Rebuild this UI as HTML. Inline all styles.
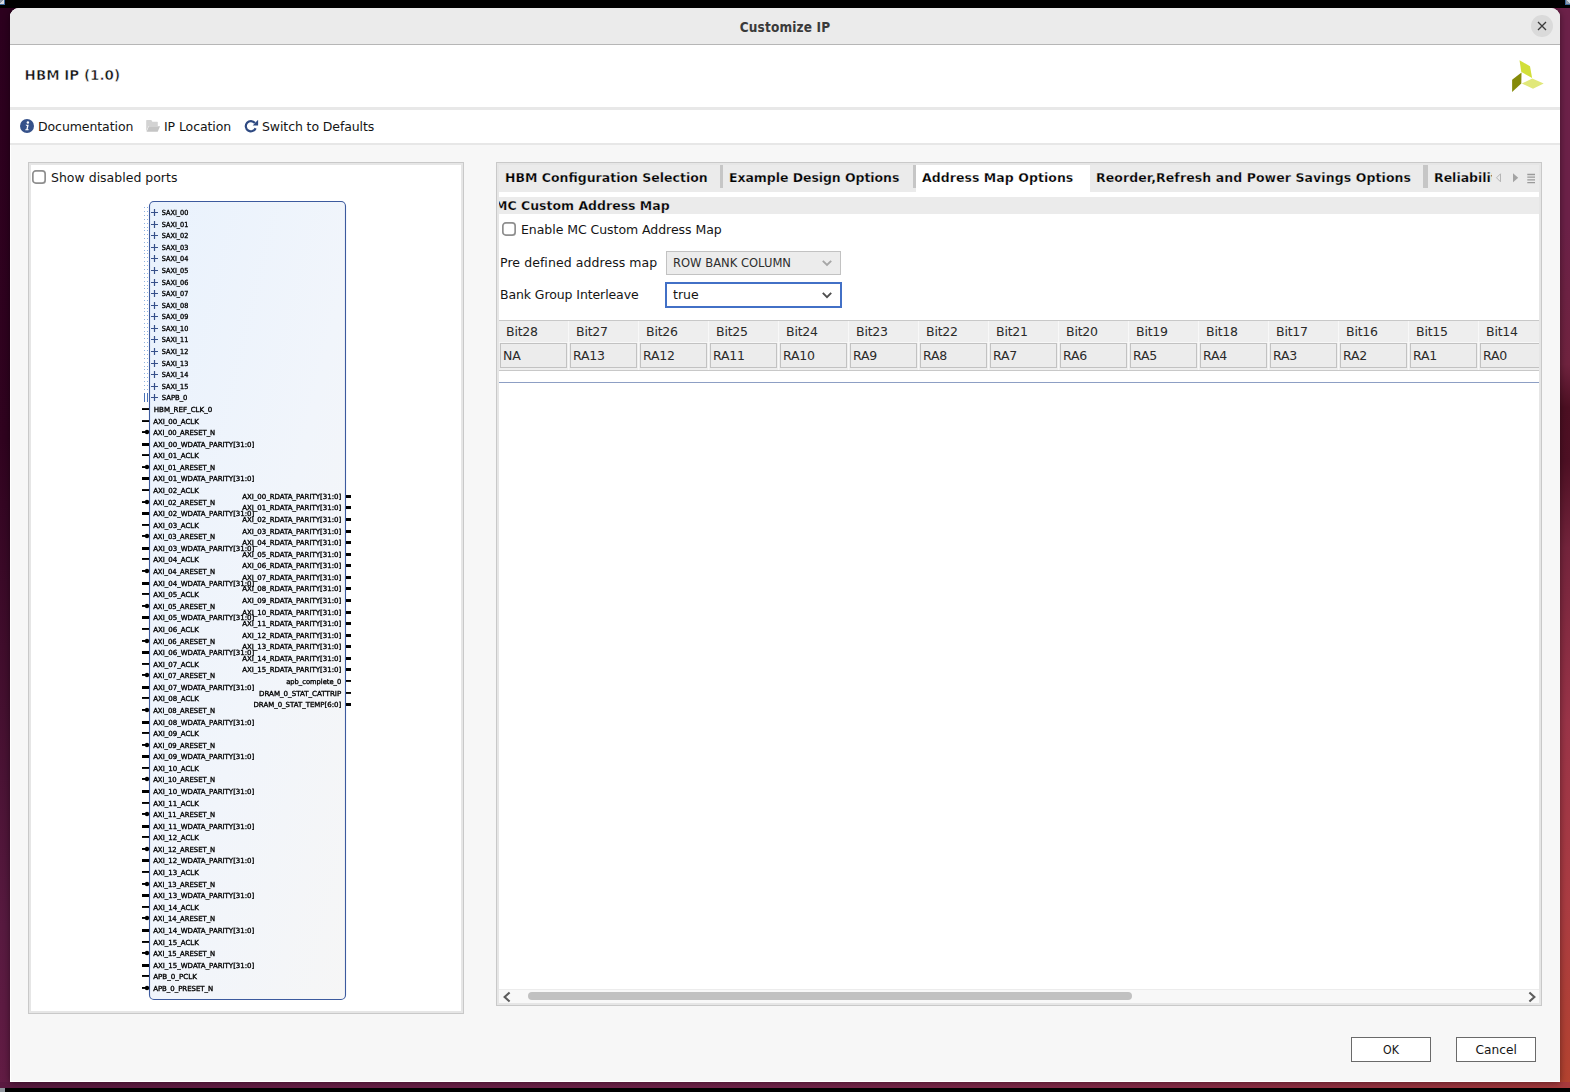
<!DOCTYPE html>
<html lang="en"><head><meta charset="utf-8"><title>Customize IP</title>
<style>
*{box-sizing:border-box;margin:0;padding:0}
html,body{width:1570px;height:1092px;overflow:hidden;background:#000}
body{position:relative;font-family:"DejaVu Sans","Liberation Sans",sans-serif;font-size:12.5px;color:#141414;-webkit-font-smoothing:antialiased}
.abs{position:absolute}
.t{position:absolute;white-space:nowrap;line-height:16px;height:16px}
.b{font-weight:bold}
#desk{position:absolute;left:0;top:8px;width:1570px;height:1080px;background:linear-gradient(90deg,#2c001e 0,#2c001e 10px,rgba(0,0,0,0) 10px),#6b2048}
#deskL{position:absolute;left:0;top:8px;width:10px;height:1080px;background:linear-gradient(180deg,#2c001e 0%,#30031f 40%,#451030 65%,#581a40 85%,#621c44 100%)}
#deskR{position:absolute;left:1560px;top:8px;width:10px;height:1080px;background:linear-gradient(180deg,#6c2149 0%,#6c2148 20%,#70233f 33%,#4c0f22 37%,#4e1024 42%,#74243c 50%,#9a3448 66%,#ab3c42 83%,#b4432f 100%)}
#deskB{position:absolute;left:0;top:1082px;width:1570px;height:6px;background:linear-gradient(90deg,#5a1940 0%,#6a1f48 20%,#74244c 50%,#8a2c48 75%,#a83a3c 100%)}
#dlg{box-shadow:0 1px 7px rgba(0,0,0,.45),inset 1px 0 0 #fff,inset 0 -1px 0 #fff;position:absolute;left:10px;top:8px;width:1550px;height:1074px;background:#f7f7f7;border-radius:9px 9px 0 0;overflow:hidden}
#titlebar{position:absolute;left:0;top:0;width:1550px;height:36px;background:#ebebeb}
#titleline{position:absolute;left:0;top:36px;width:1550px;height:1px;background:#b6b6b6}
#hdr{position:absolute;left:0;top:37px;width:1550px;height:62px;background:#fff}
#sep1{position:absolute;left:0;top:99px;width:1550px;height:3px;background:#e8e8e8}
#tb{position:absolute;left:0;top:102px;width:1550px;height:33px;background:#fff}
#sep2{position:absolute;left:0;top:135px;width:1550px;height:2px;background:#e7e7e7}
.panel{position:absolute;border:1px solid #c9c9c9;background:#fff;box-shadow:inset 0 0 0 2px #e6e6e6}
.cb{position:absolute;width:14px;height:14px;border:1.3px solid #8c8c8c;border-radius:3.5px;background:#fff}
.btn{position:absolute;width:80px;height:25px;border:1px solid #6a6a6a;background:#fff;text-align:center;line-height:23px}
svg.diag{position:absolute;left:28px;top:162px;will-change:transform}
.cell{width:67px;height:25px;border:1px solid #c2c2c2;background:#ececec}
#tbl .t{color:#2a2a2a;letter-spacing:-0.2px}
.e1{-webkit-text-stroke:0.25px #ebebeb;color:#000}
.e2{-webkit-text-stroke:0.25px #ffffff;color:#000}

</style></head>
<body>
<div class="abs" style="left:0;top:0;width:5px;height:5px;background:linear-gradient(135deg,#8d97a8 45%,#d6dae2 46%);border-right:1px solid #3f6a9f;border-bottom:1px solid #3f6a9f"></div><div class="abs" style="left:0;top:1088px;width:5px;height:4px;background:#8f949c"></div>
<div class="abs" style="left:1565px;top:0;width:5px;height:5px;background:linear-gradient(225deg,#d6dae2 45%,#8d97a8 46%);border-left:1px solid #3f6a9f;border-bottom:1px solid #3f6a9f"></div>
<div class="abs" style="left:0;top:8px;width:785px;height:12px;background:#2c001e"></div><div class="abs" style="left:785px;top:8px;width:785px;height:12px;background:#6c2149"></div><div id="deskL"></div><div id="deskR"></div><div id="deskB"></div>
<div id="dlg">
 <div id="titlebar"></div><div id="titleline"></div>
 <div class="t b" id="ttl" style="letter-spacing:0.17px;left:0;width:1550px;top:11px;text-align:center;font-size:13.5px;color:#3a3a3a;font-family:'DejaVu Sans Condensed','DejaVu Sans',sans-serif">Customize IP</div>
 <div class="abs" style="left:1521px;top:7px;width:22px;height:22px;border-radius:11px;background:#dadada"></div>
 <svg class="abs" style="left:1521px;top:7px" width="22" height="22" viewBox="0 0 22 22"><path d="M7 7l8 8M15 7l-8 8" stroke="#3a3a3a" stroke-width="1.3" fill="none"/></svg>
 <div id="hdr"></div>
 <div class="t b e2" id="hbm" style="-webkit-text-stroke:0.55px #fff;left:14.6px;top:59px;font-size:13.5px;color:#111">HBM IP (1.0)</div>
 <svg class="abs" style="left:1495px;top:48px" width="45" height="45" viewBox="1505 56 45 45"><polygon points="1519.5,60.2 1530,66.3 1532.1,77.9 1521.3,72" fill="#d2df3a"/><polygon points="1521.5,72.4 1521.3,83.4 1512.1,91.9 1512.1,79.8" fill="#858a09"/><polygon points="1521.8,83.4 1532.3,78.6 1543.7,83.4 1533,88.7" fill="#e1e87a"/></svg>
 <div id="sep1"></div><div id="tb"></div><div id="sep2"></div>
 <svg class="abs" style="left:10px;top:111px" width="14" height="14" viewBox="0 0 14 14"><circle cx="7" cy="7" r="7" fill="#36528a"/><circle cx="7.9" cy="3.5" r="1.2" fill="#fff"/><path d="M5.6 5.7h3.1l-1 4.5h1l-.25 1.1H5.2l.25-1.1h.9l.75-3.4h-.95z" fill="#fff"/></svg>
 <div class="t" id="doc" style="letter-spacing:-0.08px;left:28px;top:111px">Documentation</div>
 <svg class="abs" style="left:135px;top:110px" width="17" height="16" viewBox="145 118 17 16"><path d="M146.2 120.6q0-.5.5-.5h4.6l1.1 1.7h4.9q.5 0 .5.5v3.6H148.6L146.2 131.4z" fill="#d3d3d3"/><path d="M148.9 126.2H160.1L157.7 131.8H146.6z" fill="#c5c5c5"/></svg>
 <div class="t" id="iploc" style="letter-spacing:-0.09px;left:154px;top:111px">IP Location</div>
 <svg class="abs" style="left:233px;top:109px" width="18" height="18" viewBox="243 117 18 18"><path d="M254.9 123.0A5.1 5.1 0 1 0 255.6 128.2" stroke="#2f4a82" stroke-width="2.2" fill="none"/><path d="M258.1 119.7V125.5H252.7z" fill="#2f4a82"/></svg>
 <div class="t" id="sw" style="letter-spacing:-0.1px;left:252px;top:111px">Switch to Defaults</div>
</div>
<!-- left panel -->
<div class="panel" style="left:28px;top:162px;width:436px;height:852px"></div>
<svg class="abs" style="left:32px;top:170px" width="14" height="14" viewBox="0 0 14 14"><rect x="0.85" y="0.85" width="12.3" height="12.3" rx="3" ry="3" fill="#fff" stroke="#8f8f8f" stroke-width="1.7"/></svg>
<div class="t" id="sdp" style="left:51px;top:170px">Show disabled ports</div>
<svg class="diag" width="436" height="852" viewBox="28 162 436 852">
<defs><linearGradient id="bg" x1="0" y1="0" x2="1" y2="1"><stop offset="0" stop-color="#e9f2fd"/><stop offset="0.55" stop-color="#f1f5fb"/><stop offset="1" stop-color="#f6f6f6"/></linearGradient></defs>
<rect x="149.5" y="201.5" width="196" height="798" rx="4.5" ry="4.5" fill="url(#bg)" stroke="#3c5a9e" stroke-width="1.1"/>
<g font-family="'DejaVu Sans', 'Liberation Sans', sans-serif" font-size="7" fill="#000" stroke="#000" stroke-width="0.34">
<path d="M151 212.5h7M154.5 209v7" stroke="#36508a" stroke-width="1.2" fill="none"/>
<rect x="144" y="207" width="1" height="1" fill="#8db0e0" stroke="none"/><rect x="147" y="207" width="1" height="1" fill="#8db0e0" stroke="none"/>
<rect x="144" y="211" width="1" height="1" fill="#8db0e0" stroke="none"/><rect x="147" y="211" width="1" height="1" fill="#8db0e0" stroke="none"/>
<rect x="144" y="215" width="1" height="1" fill="#8db0e0" stroke="none"/><rect x="147" y="215" width="1" height="1" fill="#8db0e0" stroke="none"/>
<text x="161.8" y="215" textLength="26.6" lengthAdjust="spacingAndGlyphs">SAXI_00</text>
<path d="M151 224.5h7M154.5 221v7" stroke="#36508a" stroke-width="1.2" fill="none"/>
<rect x="144" y="219" width="1" height="1" fill="#8db0e0" stroke="none"/><rect x="147" y="219" width="1" height="1" fill="#8db0e0" stroke="none"/>
<rect x="144" y="223" width="1" height="1" fill="#8db0e0" stroke="none"/><rect x="147" y="223" width="1" height="1" fill="#8db0e0" stroke="none"/>
<rect x="144" y="227" width="1" height="1" fill="#8db0e0" stroke="none"/><rect x="147" y="227" width="1" height="1" fill="#8db0e0" stroke="none"/>
<text x="161.8" y="227" textLength="26.6" lengthAdjust="spacingAndGlyphs">SAXI_01</text>
<path d="M151 235.5h7M154.5 232v7" stroke="#36508a" stroke-width="1.2" fill="none"/>
<rect x="144" y="230" width="1" height="1" fill="#8db0e0" stroke="none"/><rect x="147" y="230" width="1" height="1" fill="#8db0e0" stroke="none"/>
<rect x="144" y="234" width="1" height="1" fill="#8db0e0" stroke="none"/><rect x="147" y="234" width="1" height="1" fill="#8db0e0" stroke="none"/>
<rect x="144" y="238" width="1" height="1" fill="#8db0e0" stroke="none"/><rect x="147" y="238" width="1" height="1" fill="#8db0e0" stroke="none"/>
<text x="161.8" y="238" textLength="26.6" lengthAdjust="spacingAndGlyphs">SAXI_02</text>
<path d="M151 247.5h7M154.5 244v7" stroke="#36508a" stroke-width="1.2" fill="none"/>
<rect x="144" y="242" width="1" height="1" fill="#8db0e0" stroke="none"/><rect x="147" y="242" width="1" height="1" fill="#8db0e0" stroke="none"/>
<rect x="144" y="246" width="1" height="1" fill="#8db0e0" stroke="none"/><rect x="147" y="246" width="1" height="1" fill="#8db0e0" stroke="none"/>
<rect x="144" y="250" width="1" height="1" fill="#8db0e0" stroke="none"/><rect x="147" y="250" width="1" height="1" fill="#8db0e0" stroke="none"/>
<text x="161.8" y="250" textLength="26.6" lengthAdjust="spacingAndGlyphs">SAXI_03</text>
<path d="M151 258.5h7M154.5 255v7" stroke="#36508a" stroke-width="1.2" fill="none"/>
<rect x="144" y="253" width="1" height="1" fill="#8db0e0" stroke="none"/><rect x="147" y="253" width="1" height="1" fill="#8db0e0" stroke="none"/>
<rect x="144" y="257" width="1" height="1" fill="#8db0e0" stroke="none"/><rect x="147" y="257" width="1" height="1" fill="#8db0e0" stroke="none"/>
<rect x="144" y="261" width="1" height="1" fill="#8db0e0" stroke="none"/><rect x="147" y="261" width="1" height="1" fill="#8db0e0" stroke="none"/>
<text x="161.8" y="261" textLength="26.6" lengthAdjust="spacingAndGlyphs">SAXI_04</text>
<path d="M151 270.5h7M154.5 267v7" stroke="#36508a" stroke-width="1.2" fill="none"/>
<rect x="144" y="265" width="1" height="1" fill="#8db0e0" stroke="none"/><rect x="147" y="265" width="1" height="1" fill="#8db0e0" stroke="none"/>
<rect x="144" y="269" width="1" height="1" fill="#8db0e0" stroke="none"/><rect x="147" y="269" width="1" height="1" fill="#8db0e0" stroke="none"/>
<rect x="144" y="273" width="1" height="1" fill="#8db0e0" stroke="none"/><rect x="147" y="273" width="1" height="1" fill="#8db0e0" stroke="none"/>
<text x="161.8" y="273" textLength="26.6" lengthAdjust="spacingAndGlyphs">SAXI_05</text>
<path d="M151 282.5h7M154.5 279v7" stroke="#36508a" stroke-width="1.2" fill="none"/>
<rect x="144" y="277" width="1" height="1" fill="#8db0e0" stroke="none"/><rect x="147" y="277" width="1" height="1" fill="#8db0e0" stroke="none"/>
<rect x="144" y="281" width="1" height="1" fill="#8db0e0" stroke="none"/><rect x="147" y="281" width="1" height="1" fill="#8db0e0" stroke="none"/>
<rect x="144" y="285" width="1" height="1" fill="#8db0e0" stroke="none"/><rect x="147" y="285" width="1" height="1" fill="#8db0e0" stroke="none"/>
<text x="161.8" y="285" textLength="26.6" lengthAdjust="spacingAndGlyphs">SAXI_06</text>
<path d="M151 293.5h7M154.5 290v7" stroke="#36508a" stroke-width="1.2" fill="none"/>
<rect x="144" y="288" width="1" height="1" fill="#8db0e0" stroke="none"/><rect x="147" y="288" width="1" height="1" fill="#8db0e0" stroke="none"/>
<rect x="144" y="292" width="1" height="1" fill="#8db0e0" stroke="none"/><rect x="147" y="292" width="1" height="1" fill="#8db0e0" stroke="none"/>
<rect x="144" y="296" width="1" height="1" fill="#8db0e0" stroke="none"/><rect x="147" y="296" width="1" height="1" fill="#8db0e0" stroke="none"/>
<text x="161.8" y="296" textLength="26.6" lengthAdjust="spacingAndGlyphs">SAXI_07</text>
<path d="M151 305.5h7M154.5 302v7" stroke="#36508a" stroke-width="1.2" fill="none"/>
<rect x="144" y="300" width="1" height="1" fill="#8db0e0" stroke="none"/><rect x="147" y="300" width="1" height="1" fill="#8db0e0" stroke="none"/>
<rect x="144" y="304" width="1" height="1" fill="#8db0e0" stroke="none"/><rect x="147" y="304" width="1" height="1" fill="#8db0e0" stroke="none"/>
<rect x="144" y="308" width="1" height="1" fill="#8db0e0" stroke="none"/><rect x="147" y="308" width="1" height="1" fill="#8db0e0" stroke="none"/>
<text x="161.8" y="308" textLength="26.6" lengthAdjust="spacingAndGlyphs">SAXI_08</text>
<path d="M151 316.5h7M154.5 313v7" stroke="#36508a" stroke-width="1.2" fill="none"/>
<rect x="144" y="311" width="1" height="1" fill="#8db0e0" stroke="none"/><rect x="147" y="311" width="1" height="1" fill="#8db0e0" stroke="none"/>
<rect x="144" y="315" width="1" height="1" fill="#8db0e0" stroke="none"/><rect x="147" y="315" width="1" height="1" fill="#8db0e0" stroke="none"/>
<rect x="144" y="319" width="1" height="1" fill="#8db0e0" stroke="none"/><rect x="147" y="319" width="1" height="1" fill="#8db0e0" stroke="none"/>
<text x="161.8" y="319" textLength="26.6" lengthAdjust="spacingAndGlyphs">SAXI_09</text>
<path d="M151 328.5h7M154.5 325v7" stroke="#36508a" stroke-width="1.2" fill="none"/>
<rect x="144" y="323" width="1" height="1" fill="#8db0e0" stroke="none"/><rect x="147" y="323" width="1" height="1" fill="#8db0e0" stroke="none"/>
<rect x="144" y="327" width="1" height="1" fill="#8db0e0" stroke="none"/><rect x="147" y="327" width="1" height="1" fill="#8db0e0" stroke="none"/>
<rect x="144" y="331" width="1" height="1" fill="#8db0e0" stroke="none"/><rect x="147" y="331" width="1" height="1" fill="#8db0e0" stroke="none"/>
<text x="161.8" y="331" textLength="26.6" lengthAdjust="spacingAndGlyphs">SAXI_10</text>
<path d="M151 339.5h7M154.5 336v7" stroke="#36508a" stroke-width="1.2" fill="none"/>
<rect x="144" y="334" width="1" height="1" fill="#8db0e0" stroke="none"/><rect x="147" y="334" width="1" height="1" fill="#8db0e0" stroke="none"/>
<rect x="144" y="338" width="1" height="1" fill="#8db0e0" stroke="none"/><rect x="147" y="338" width="1" height="1" fill="#8db0e0" stroke="none"/>
<rect x="144" y="342" width="1" height="1" fill="#8db0e0" stroke="none"/><rect x="147" y="342" width="1" height="1" fill="#8db0e0" stroke="none"/>
<text x="161.8" y="342" textLength="26.6" lengthAdjust="spacingAndGlyphs">SAXI_11</text>
<path d="M151 351.5h7M154.5 348v7" stroke="#36508a" stroke-width="1.2" fill="none"/>
<rect x="144" y="346" width="1" height="1" fill="#8db0e0" stroke="none"/><rect x="147" y="346" width="1" height="1" fill="#8db0e0" stroke="none"/>
<rect x="144" y="350" width="1" height="1" fill="#8db0e0" stroke="none"/><rect x="147" y="350" width="1" height="1" fill="#8db0e0" stroke="none"/>
<rect x="144" y="354" width="1" height="1" fill="#8db0e0" stroke="none"/><rect x="147" y="354" width="1" height="1" fill="#8db0e0" stroke="none"/>
<text x="161.8" y="354" textLength="26.6" lengthAdjust="spacingAndGlyphs">SAXI_12</text>
<path d="M151 363.5h7M154.5 360v7" stroke="#36508a" stroke-width="1.2" fill="none"/>
<rect x="144" y="358" width="1" height="1" fill="#8db0e0" stroke="none"/><rect x="147" y="358" width="1" height="1" fill="#8db0e0" stroke="none"/>
<rect x="144" y="362" width="1" height="1" fill="#8db0e0" stroke="none"/><rect x="147" y="362" width="1" height="1" fill="#8db0e0" stroke="none"/>
<rect x="144" y="366" width="1" height="1" fill="#8db0e0" stroke="none"/><rect x="147" y="366" width="1" height="1" fill="#8db0e0" stroke="none"/>
<text x="161.8" y="366" textLength="26.6" lengthAdjust="spacingAndGlyphs">SAXI_13</text>
<path d="M151 374.5h7M154.5 371v7" stroke="#36508a" stroke-width="1.2" fill="none"/>
<rect x="144" y="369" width="1" height="1" fill="#8db0e0" stroke="none"/><rect x="147" y="369" width="1" height="1" fill="#8db0e0" stroke="none"/>
<rect x="144" y="373" width="1" height="1" fill="#8db0e0" stroke="none"/><rect x="147" y="373" width="1" height="1" fill="#8db0e0" stroke="none"/>
<rect x="144" y="377" width="1" height="1" fill="#8db0e0" stroke="none"/><rect x="147" y="377" width="1" height="1" fill="#8db0e0" stroke="none"/>
<text x="161.8" y="377" textLength="26.6" lengthAdjust="spacingAndGlyphs">SAXI_14</text>
<path d="M151 386.5h7M154.5 383v7" stroke="#36508a" stroke-width="1.2" fill="none"/>
<rect x="144" y="381" width="1" height="1" fill="#8db0e0" stroke="none"/><rect x="147" y="381" width="1" height="1" fill="#8db0e0" stroke="none"/>
<rect x="144" y="385" width="1" height="1" fill="#8db0e0" stroke="none"/><rect x="147" y="385" width="1" height="1" fill="#8db0e0" stroke="none"/>
<rect x="144" y="389" width="1" height="1" fill="#8db0e0" stroke="none"/><rect x="147" y="389" width="1" height="1" fill="#8db0e0" stroke="none"/>
<text x="161.8" y="389" textLength="26.6" lengthAdjust="spacingAndGlyphs">SAXI_15</text>
<path d="M151 397.5h7M154.5 394v7" stroke="#36508a" stroke-width="1.2" fill="none"/>
<rect x="144" y="393" width="1" height="9" fill="#4a72b8" stroke="none"/><rect x="147" y="393" width="1" height="9" fill="#4a72b8" stroke="none"/>
<text x="161.8" y="400" textLength="25.6" lengthAdjust="spacingAndGlyphs">SAPB_0</text>
<rect x="142" y="408.1" width="7" height="1.9" stroke="none"/>
<text x="153.8" y="412" textLength="58.4" lengthAdjust="spacingAndGlyphs">HBM_REF_CLK_0</text>
<rect x="142" y="420.1" width="7" height="1.9" stroke="none"/>
<text x="153.2" y="424" textLength="45.7" lengthAdjust="spacingAndGlyphs">AXI_00_ACLK</text>
<rect x="142" y="431.1" width="4" height="1.9" stroke="none"/><circle cx="147" cy="432" r="2.2" stroke="none"/>
<text x="153.2" y="435" textLength="62.0" lengthAdjust="spacingAndGlyphs">AXI_00_ARESET_N</text>
<rect x="142" y="443" width="7" height="3" stroke="none"/>
<text x="153.2" y="447" textLength="101.1" lengthAdjust="spacingAndGlyphs">AXI_00_WDATA_PARITY[31:0]</text>
<rect x="142" y="454.1" width="7" height="1.9" stroke="none"/>
<text x="153.2" y="458" textLength="45.7" lengthAdjust="spacingAndGlyphs">AXI_01_ACLK</text>
<rect x="142" y="466.1" width="4" height="1.9" stroke="none"/><circle cx="147" cy="467" r="2.2" stroke="none"/>
<text x="153.2" y="470" textLength="62.0" lengthAdjust="spacingAndGlyphs">AXI_01_ARESET_N</text>
<rect x="142" y="477" width="7" height="3" stroke="none"/>
<text x="153.2" y="481" textLength="101.1" lengthAdjust="spacingAndGlyphs">AXI_01_WDATA_PARITY[31:0]</text>
<rect x="142" y="489.1" width="7" height="1.9" stroke="none"/>
<text x="153.2" y="493" textLength="45.7" lengthAdjust="spacingAndGlyphs">AXI_02_ACLK</text>
<rect x="142" y="501.1" width="4" height="1.9" stroke="none"/><circle cx="147" cy="502" r="2.2" stroke="none"/>
<text x="153.2" y="505" textLength="62.0" lengthAdjust="spacingAndGlyphs">AXI_02_ARESET_N</text>
<rect x="142" y="512" width="7" height="3" stroke="none"/>
<text x="153.2" y="516" textLength="101.1" lengthAdjust="spacingAndGlyphs">AXI_02_WDATA_PARITY[31:0]</text>
<rect x="142" y="524.0" width="7" height="1.9" stroke="none"/>
<text x="153.2" y="528" textLength="45.7" lengthAdjust="spacingAndGlyphs">AXI_03_ACLK</text>
<rect x="142" y="535.0" width="4" height="1.9" stroke="none"/><circle cx="147" cy="536" r="2.2" stroke="none"/>
<text x="153.2" y="539" textLength="62.0" lengthAdjust="spacingAndGlyphs">AXI_03_ARESET_N</text>
<rect x="142" y="547" width="7" height="3" stroke="none"/>
<text x="153.2" y="551" textLength="101.1" lengthAdjust="spacingAndGlyphs">AXI_03_WDATA_PARITY[31:0]</text>
<rect x="142" y="558.0" width="7" height="1.9" stroke="none"/>
<text x="153.2" y="562" textLength="45.7" lengthAdjust="spacingAndGlyphs">AXI_04_ACLK</text>
<rect x="142" y="570.0" width="4" height="1.9" stroke="none"/><circle cx="147" cy="571" r="2.2" stroke="none"/>
<text x="153.2" y="574" textLength="62.0" lengthAdjust="spacingAndGlyphs">AXI_04_ARESET_N</text>
<rect x="142" y="582" width="7" height="3" stroke="none"/>
<text x="153.2" y="586" textLength="101.1" lengthAdjust="spacingAndGlyphs">AXI_04_WDATA_PARITY[31:0]</text>
<rect x="142" y="593.0" width="7" height="1.9" stroke="none"/>
<text x="153.2" y="597" textLength="45.7" lengthAdjust="spacingAndGlyphs">AXI_05_ACLK</text>
<rect x="142" y="605.0" width="4" height="1.9" stroke="none"/><circle cx="147" cy="606" r="2.2" stroke="none"/>
<text x="153.2" y="609" textLength="62.0" lengthAdjust="spacingAndGlyphs">AXI_05_ARESET_N</text>
<rect x="142" y="616" width="7" height="3" stroke="none"/>
<text x="153.2" y="620" textLength="101.1" lengthAdjust="spacingAndGlyphs">AXI_05_WDATA_PARITY[31:0]</text>
<rect x="142" y="628.0" width="7" height="1.9" stroke="none"/>
<text x="153.2" y="632" textLength="45.7" lengthAdjust="spacingAndGlyphs">AXI_06_ACLK</text>
<rect x="142" y="640.0" width="4" height="1.9" stroke="none"/><circle cx="147" cy="641" r="2.2" stroke="none"/>
<text x="153.2" y="644" textLength="62.0" lengthAdjust="spacingAndGlyphs">AXI_06_ARESET_N</text>
<rect x="142" y="651" width="7" height="3" stroke="none"/>
<text x="153.2" y="655" textLength="101.1" lengthAdjust="spacingAndGlyphs">AXI_06_WDATA_PARITY[31:0]</text>
<rect x="142" y="663.0" width="7" height="1.9" stroke="none"/>
<text x="153.2" y="667" textLength="45.7" lengthAdjust="spacingAndGlyphs">AXI_07_ACLK</text>
<rect x="142" y="674.0" width="4" height="1.9" stroke="none"/><circle cx="147" cy="675" r="2.2" stroke="none"/>
<text x="153.2" y="678" textLength="62.0" lengthAdjust="spacingAndGlyphs">AXI_07_ARESET_N</text>
<rect x="142" y="686" width="7" height="3" stroke="none"/>
<text x="153.2" y="690" textLength="101.1" lengthAdjust="spacingAndGlyphs">AXI_07_WDATA_PARITY[31:0]</text>
<rect x="142" y="697.0" width="7" height="1.9" stroke="none"/>
<text x="153.2" y="701" textLength="45.7" lengthAdjust="spacingAndGlyphs">AXI_08_ACLK</text>
<rect x="142" y="709.0" width="4" height="1.9" stroke="none"/><circle cx="147" cy="710" r="2.2" stroke="none"/>
<text x="153.2" y="713" textLength="62.0" lengthAdjust="spacingAndGlyphs">AXI_08_ARESET_N</text>
<rect x="142" y="721" width="7" height="3" stroke="none"/>
<text x="153.2" y="725" textLength="101.1" lengthAdjust="spacingAndGlyphs">AXI_08_WDATA_PARITY[31:0]</text>
<rect x="142" y="732.0" width="7" height="1.9" stroke="none"/>
<text x="153.2" y="736" textLength="45.7" lengthAdjust="spacingAndGlyphs">AXI_09_ACLK</text>
<rect x="142" y="744.0" width="4" height="1.9" stroke="none"/><circle cx="147" cy="745" r="2.2" stroke="none"/>
<text x="153.2" y="748" textLength="62.0" lengthAdjust="spacingAndGlyphs">AXI_09_ARESET_N</text>
<rect x="142" y="755" width="7" height="3" stroke="none"/>
<text x="153.2" y="759" textLength="101.1" lengthAdjust="spacingAndGlyphs">AXI_09_WDATA_PARITY[31:0]</text>
<rect x="142" y="767.0" width="7" height="1.9" stroke="none"/>
<text x="153.2" y="771" textLength="45.7" lengthAdjust="spacingAndGlyphs">AXI_10_ACLK</text>
<rect x="142" y="778.0" width="4" height="1.9" stroke="none"/><circle cx="147" cy="779" r="2.2" stroke="none"/>
<text x="153.2" y="782" textLength="62.0" lengthAdjust="spacingAndGlyphs">AXI_10_ARESET_N</text>
<rect x="142" y="790" width="7" height="3" stroke="none"/>
<text x="153.2" y="794" textLength="101.1" lengthAdjust="spacingAndGlyphs">AXI_10_WDATA_PARITY[31:0]</text>
<rect x="142" y="802.0" width="7" height="1.9" stroke="none"/>
<text x="153.2" y="806" textLength="45.7" lengthAdjust="spacingAndGlyphs">AXI_11_ACLK</text>
<rect x="142" y="813.0" width="4" height="1.9" stroke="none"/><circle cx="147" cy="814" r="2.2" stroke="none"/>
<text x="153.2" y="817" textLength="62.0" lengthAdjust="spacingAndGlyphs">AXI_11_ARESET_N</text>
<rect x="142" y="825" width="7" height="3" stroke="none"/>
<text x="153.2" y="829" textLength="101.1" lengthAdjust="spacingAndGlyphs">AXI_11_WDATA_PARITY[31:0]</text>
<rect x="142" y="836.0" width="7" height="1.9" stroke="none"/>
<text x="153.2" y="840" textLength="45.7" lengthAdjust="spacingAndGlyphs">AXI_12_ACLK</text>
<rect x="142" y="848.0" width="4" height="1.9" stroke="none"/><circle cx="147" cy="849" r="2.2" stroke="none"/>
<text x="153.2" y="852" textLength="62.0" lengthAdjust="spacingAndGlyphs">AXI_12_ARESET_N</text>
<rect x="142" y="859" width="7" height="3" stroke="none"/>
<text x="153.2" y="863" textLength="101.1" lengthAdjust="spacingAndGlyphs">AXI_12_WDATA_PARITY[31:0]</text>
<rect x="142" y="871.0" width="7" height="1.9" stroke="none"/>
<text x="153.2" y="875" textLength="45.7" lengthAdjust="spacingAndGlyphs">AXI_13_ACLK</text>
<rect x="142" y="883.0" width="4" height="1.9" stroke="none"/><circle cx="147" cy="884" r="2.2" stroke="none"/>
<text x="153.2" y="887" textLength="62.0" lengthAdjust="spacingAndGlyphs">AXI_13_ARESET_N</text>
<rect x="142" y="894" width="7" height="3" stroke="none"/>
<text x="153.2" y="898" textLength="101.1" lengthAdjust="spacingAndGlyphs">AXI_13_WDATA_PARITY[31:0]</text>
<rect x="142" y="906.0" width="7" height="1.9" stroke="none"/>
<text x="153.2" y="910" textLength="45.7" lengthAdjust="spacingAndGlyphs">AXI_14_ACLK</text>
<rect x="142" y="917.0" width="4" height="1.9" stroke="none"/><circle cx="147" cy="918" r="2.2" stroke="none"/>
<text x="153.2" y="921" textLength="62.0" lengthAdjust="spacingAndGlyphs">AXI_14_ARESET_N</text>
<rect x="142" y="929" width="7" height="3" stroke="none"/>
<text x="153.2" y="933" textLength="101.1" lengthAdjust="spacingAndGlyphs">AXI_14_WDATA_PARITY[31:0]</text>
<rect x="142" y="941.0" width="7" height="1.9" stroke="none"/>
<text x="153.2" y="945" textLength="45.7" lengthAdjust="spacingAndGlyphs">AXI_15_ACLK</text>
<rect x="142" y="952.0" width="4" height="1.9" stroke="none"/><circle cx="147" cy="953" r="2.2" stroke="none"/>
<text x="153.2" y="956" textLength="62.0" lengthAdjust="spacingAndGlyphs">AXI_15_ARESET_N</text>
<rect x="142" y="964" width="7" height="3" stroke="none"/>
<text x="153.2" y="968" textLength="101.1" lengthAdjust="spacingAndGlyphs">AXI_15_WDATA_PARITY[31:0]</text>
<rect x="142" y="975.0" width="7" height="1.9" stroke="none"/>
<text x="153.2" y="979" textLength="43.7" lengthAdjust="spacingAndGlyphs">APB_0_PCLK</text>
<rect x="142" y="987.0" width="4" height="1.9" stroke="none"/><circle cx="147" cy="988" r="2.2" stroke="none"/>
<text x="153.2" y="991" textLength="60.0" lengthAdjust="spacingAndGlyphs">APB_0_PRESET_N</text>
<rect x="346" y="495" width="5" height="3" stroke="none"/>
<text x="242.2" y="499" textLength="99.0" lengthAdjust="spacingAndGlyphs">AXI_00_RDATA_PARITY[31:0]</text>
<rect x="346" y="506" width="5" height="3" stroke="none"/>
<text x="242.2" y="510" textLength="99.0" lengthAdjust="spacingAndGlyphs">AXI_01_RDATA_PARITY[31:0]</text>
<rect x="346" y="518" width="5" height="3" stroke="none"/>
<text x="242.2" y="522" textLength="99.0" lengthAdjust="spacingAndGlyphs">AXI_02_RDATA_PARITY[31:0]</text>
<rect x="346" y="530" width="5" height="3" stroke="none"/>
<text x="242.2" y="534" textLength="99.0" lengthAdjust="spacingAndGlyphs">AXI_03_RDATA_PARITY[31:0]</text>
<rect x="346" y="541" width="5" height="3" stroke="none"/>
<text x="242.2" y="545" textLength="99.0" lengthAdjust="spacingAndGlyphs">AXI_04_RDATA_PARITY[31:0]</text>
<rect x="346" y="553" width="5" height="3" stroke="none"/>
<text x="242.2" y="557" textLength="99.0" lengthAdjust="spacingAndGlyphs">AXI_05_RDATA_PARITY[31:0]</text>
<rect x="346" y="564" width="5" height="3" stroke="none"/>
<text x="242.2" y="568" textLength="99.0" lengthAdjust="spacingAndGlyphs">AXI_06_RDATA_PARITY[31:0]</text>
<rect x="346" y="576" width="5" height="3" stroke="none"/>
<text x="242.2" y="580" textLength="99.0" lengthAdjust="spacingAndGlyphs">AXI_07_RDATA_PARITY[31:0]</text>
<rect x="346" y="587" width="5" height="3" stroke="none"/>
<text x="242.2" y="591" textLength="99.0" lengthAdjust="spacingAndGlyphs">AXI_08_RDATA_PARITY[31:0]</text>
<rect x="346" y="599" width="5" height="3" stroke="none"/>
<text x="242.2" y="603" textLength="99.0" lengthAdjust="spacingAndGlyphs">AXI_09_RDATA_PARITY[31:0]</text>
<rect x="346" y="611" width="5" height="3" stroke="none"/>
<text x="242.2" y="615" textLength="99.0" lengthAdjust="spacingAndGlyphs">AXI_10_RDATA_PARITY[31:0]</text>
<rect x="346" y="622" width="5" height="3" stroke="none"/>
<text x="242.2" y="626" textLength="99.0" lengthAdjust="spacingAndGlyphs">AXI_11_RDATA_PARITY[31:0]</text>
<rect x="346" y="634" width="5" height="3" stroke="none"/>
<text x="242.2" y="638" textLength="99.0" lengthAdjust="spacingAndGlyphs">AXI_12_RDATA_PARITY[31:0]</text>
<rect x="346" y="645" width="5" height="3" stroke="none"/>
<text x="242.2" y="649" textLength="99.0" lengthAdjust="spacingAndGlyphs">AXI_13_RDATA_PARITY[31:0]</text>
<rect x="346" y="657" width="5" height="3" stroke="none"/>
<text x="242.2" y="661" textLength="99.0" lengthAdjust="spacingAndGlyphs">AXI_14_RDATA_PARITY[31:0]</text>
<rect x="346" y="668" width="5" height="3" stroke="none"/>
<text x="242.2" y="672" textLength="99.0" lengthAdjust="spacingAndGlyphs">AXI_15_RDATA_PARITY[31:0]</text>
<rect x="346" y="680.0" width="5" height="1.9" stroke="none"/>
<text x="286.2" y="684" textLength="55.0" lengthAdjust="spacingAndGlyphs">apb_complete_0</text>
<rect x="346" y="692.0" width="5" height="1.9" stroke="none"/>
<text x="259.0" y="696" textLength="82.2" lengthAdjust="spacingAndGlyphs">DRAM_0_STAT_CATTRIP</text>
<rect x="346" y="703" width="5" height="3" stroke="none"/>
<text x="253.5" y="707" textLength="87.7" lengthAdjust="spacingAndGlyphs">DRAM_0_STAT_TEMP[6:0]</text>
</g></svg>
<!-- right panel -->
<div class="panel" style="left:496px;top:162px;width:1046px;height:844px"></div>
<div class="abs" style="left:499px;top:165px;width:1040px;height:27px;background:#ebebeb"></div>
<div class="abs" style="left:916px;top:165px;width:174px;height:27px;background:#fff"></div>
<div class="abs" style="left:720px;top:165px;width:3px;height:23px;background:#c6c6c6"></div>
<div class="abs" style="left:913px;top:165px;width:3px;height:23px;background:#c6c6c6"></div>
<div class="abs" style="left:1423px;top:165px;width:5px;height:23px;background:#c6c6c6"></div>
<div class="t b e1" id="tab1" style="left:505px;top:170px">HBM Configuration Selection</div>
<div class="t b e1" id="tab2" style="letter-spacing:-0.06px;left:729px;top:170px">Example Design Options</div>
<div class="t b e2" id="tab3" style="letter-spacing:0.05px;left:922px;top:170px">Address Map Options</div>
<div class="t b e1" id="tab4" style="letter-spacing:0.09px;left:1096px;top:170px">Reorder,Refresh and Power Savings Options</div>
<div class="t b e1" id="tab5" style="left:1434px;top:170px;width:57.5px;overflow:hidden">Reliability</div>
<svg class="abs" style="left:1494px;top:170px" width="46" height="16" viewBox="1494 170 46 16"><path d="M1500.5 173.8v8l-4-4z" fill="none" stroke="#b5b5b5" stroke-width="1"/><path d="M1513 173.3v9l5.2-4.5z" fill="#a3a3a3"/><path d="M1527.3 174.5h7.7M1527.3 177.2h7.7M1527.3 179.9h7.7M1527.3 182.6h7.7" stroke="#9a9a9a" stroke-width="1.3"/></svg>
<div class="abs" style="left:499px;top:197px;width:1040px;height:17px;background:#ebebeb;overflow:hidden"><div class="t b e1" id="sec" style="left:-4px;top:1px">MC Custom Address Map</div></div>
<svg class="abs" style="left:502px;top:222px" width="14" height="14" viewBox="0 0 14 14"><rect x="0.85" y="0.85" width="12.3" height="12.3" rx="3" ry="3" fill="#fff" stroke="#8f8f8f" stroke-width="1.7"/></svg>
<div class="t" id="en" style="letter-spacing:-0.05px;left:521px;top:222px">Enable MC Custom Address Map</div>
<div class="t" id="pre" style="letter-spacing:0.07px;left:500px;top:255px">Pre defined address map</div>
<div class="abs" style="left:666px;top:251px;width:175px;height:24px;background:#ececec;border:1px solid #c2c2c2"></div>
<div class="t" id="rbc" style="transform:scaleX(0.924);transform-origin:0 0;left:673px;top:255px;color:#2e2e2e">ROW BANK COLUMN</div>
<svg class="abs" style="left:820px;top:257px" width="14" height="12" viewBox="820 257 14 12"><path d="M822.8 260.8l4.2 4.2 4.2-4.2" stroke="#a6a6a6" stroke-width="1.9" fill="none"/></svg>
<div class="t" id="bgi" style="letter-spacing:-0.1px;left:500px;top:287px">Bank Group Interleave</div>
<div class="abs" style="left:665px;top:282px;width:177px;height:26px;background:#fff;border:2px solid #4270c6"></div>
<div class="t" id="tru" style="left:673px;top:287px">true</div>
<svg class="abs" style="left:820px;top:289px" width="14" height="12" viewBox="820 289 14 12"><path d="M822.8 292.9l4.2 4.2 4.2-4.2" stroke="#4e4e4e" stroke-width="1.9" fill="none"/></svg>
<!-- table -->
<div class="abs" id="tbl" style="left:499px;top:320px;width:1040px;height:51px;background:#eeeeee;border-top:1px solid #c8c8c8;border-bottom:1px solid #c8c8c8;overflow:hidden">
<div class="abs" style="left:0;top:21px;width:1040px;height:1px;background:#f7f7f7"></div>
<div class="abs" style="left:69px;top:0;width:1px;height:49px;background:#f8f8f8"></div>
<div class="t hd" style="left:7px;top:3px">Bit28</div>
<div class="abs cell" style="left:1px;top:22px"></div><div class="t cv" style="left:4px;top:27px">NA</div>
<div class="abs" style="left:139px;top:0;width:1px;height:49px;background:#f8f8f8"></div>
<div class="t hd" style="left:77px;top:3px">Bit27</div>
<div class="abs cell" style="left:71px;top:22px"></div><div class="t cv" style="left:74px;top:27px">RA13</div>
<div class="abs" style="left:209px;top:0;width:1px;height:49px;background:#f8f8f8"></div>
<div class="t hd" style="left:147px;top:3px">Bit26</div>
<div class="abs cell" style="left:141px;top:22px"></div><div class="t cv" style="left:144px;top:27px">RA12</div>
<div class="abs" style="left:279px;top:0;width:1px;height:49px;background:#f8f8f8"></div>
<div class="t hd" style="left:217px;top:3px">Bit25</div>
<div class="abs cell" style="left:211px;top:22px"></div><div class="t cv" style="left:214px;top:27px">RA11</div>
<div class="abs" style="left:349px;top:0;width:1px;height:49px;background:#f8f8f8"></div>
<div class="t hd" style="left:287px;top:3px">Bit24</div>
<div class="abs cell" style="left:281px;top:22px"></div><div class="t cv" style="left:284px;top:27px">RA10</div>
<div class="abs" style="left:419px;top:0;width:1px;height:49px;background:#f8f8f8"></div>
<div class="t hd" style="left:357px;top:3px">Bit23</div>
<div class="abs cell" style="left:351px;top:22px"></div><div class="t cv" style="left:354px;top:27px">RA9</div>
<div class="abs" style="left:489px;top:0;width:1px;height:49px;background:#f8f8f8"></div>
<div class="t hd" style="left:427px;top:3px">Bit22</div>
<div class="abs cell" style="left:421px;top:22px"></div><div class="t cv" style="left:424px;top:27px">RA8</div>
<div class="abs" style="left:559px;top:0;width:1px;height:49px;background:#f8f8f8"></div>
<div class="t hd" style="left:497px;top:3px">Bit21</div>
<div class="abs cell" style="left:491px;top:22px"></div><div class="t cv" style="left:494px;top:27px">RA7</div>
<div class="abs" style="left:629px;top:0;width:1px;height:49px;background:#f8f8f8"></div>
<div class="t hd" style="left:567px;top:3px">Bit20</div>
<div class="abs cell" style="left:561px;top:22px"></div><div class="t cv" style="left:564px;top:27px">RA6</div>
<div class="abs" style="left:699px;top:0;width:1px;height:49px;background:#f8f8f8"></div>
<div class="t hd" style="left:637px;top:3px">Bit19</div>
<div class="abs cell" style="left:631px;top:22px"></div><div class="t cv" style="left:634px;top:27px">RA5</div>
<div class="abs" style="left:769px;top:0;width:1px;height:49px;background:#f8f8f8"></div>
<div class="t hd" style="left:707px;top:3px">Bit18</div>
<div class="abs cell" style="left:701px;top:22px"></div><div class="t cv" style="left:704px;top:27px">RA4</div>
<div class="abs" style="left:839px;top:0;width:1px;height:49px;background:#f8f8f8"></div>
<div class="t hd" style="left:777px;top:3px">Bit17</div>
<div class="abs cell" style="left:771px;top:22px"></div><div class="t cv" style="left:774px;top:27px">RA3</div>
<div class="abs" style="left:909px;top:0;width:1px;height:49px;background:#f8f8f8"></div>
<div class="t hd" style="left:847px;top:3px">Bit16</div>
<div class="abs cell" style="left:841px;top:22px"></div><div class="t cv" style="left:844px;top:27px">RA2</div>
<div class="abs" style="left:979px;top:0;width:1px;height:49px;background:#f8f8f8"></div>
<div class="t hd" style="left:917px;top:3px">Bit15</div>
<div class="abs cell" style="left:911px;top:22px"></div><div class="t cv" style="left:914px;top:27px">RA1</div>
<div class="abs" style="left:1049px;top:0;width:1px;height:49px;background:#f8f8f8"></div>
<div class="t hd" style="left:987px;top:3px">Bit14</div>
<div class="abs cell" style="left:981px;top:22px"></div><div class="t cv" style="left:984px;top:27px">RA0</div>
</div>
<div class="abs" style="left:499px;top:382px;width:1040px;height:1px;background:#8d9fc4"></div>
<!-- scrollbar -->
<div class="abs" style="left:499px;top:989px;width:1040px;height:14px;background:#f8f8f8;border-top:1px solid #ececec"></div>
<div class="abs" style="left:528px;top:992px;width:604px;height:8px;border-radius:4px;background:#c1c1c1"></div>
<svg class="abs" style="left:500px;top:990px" width="14" height="14" viewBox="0 0 14 14"><path d="M9.6 2.4L4.6 7l5 4.6" stroke="#5c5c5c" stroke-width="2.1" fill="none"/></svg>
<svg class="abs" style="left:1525px;top:990px" width="14" height="14" viewBox="0 0 14 14"><path d="M4.4 2.4l5 4.6-5 4.6" stroke="#5c5c5c" stroke-width="2.1" fill="none"/></svg>
<div class="btn" id="ok" style="left:1351px;top:1037px"><span style="display:inline-block;transform:scaleX(.88)">OK</span></div>
<div class="btn" id="cancel" style="left:1456px;top:1037px"><span style="display:inline-block;transform:scaleX(.975)">Cancel</span></div>
</body></html>
